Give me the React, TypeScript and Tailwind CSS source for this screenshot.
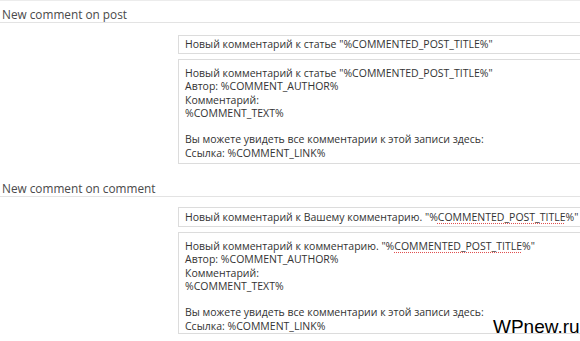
const post = {
  title: 'New comment on post',
  subject: 'Новый комментарий к статье "%COMMENTED_POST_TITLE%"',
  body: [
    'Новый комментарий к статье "%COMMENTED_POST_TITLE%"',
    'Автор: %COMMENT_AUTHOR%',
    'Комментарий:',
    '%COMMENT_TEXT%',
    '',
    'Вы можете увидеть все комментарии к этой записи здесь:',
    'Ссылка: %COMMENT_LINK%',
  ],
};

const Squiggle = ({ children }: { children: React.ReactNode }) => (
  <span className="underline decoration-dotted decoration-[#e05050] underline-offset-2">{children}</span>
);

const Heading = ({ text, className }: { text: string; className: string }) => (
  <div className={`border-b border-[#e3e3e3] pl-[2px] text-[11.8px] leading-[16px] text-[#4a4a4a] ${className}`}>{text}</div>
);

const Input = ({ children, className }: { children: React.ReactNode; className: string }) => (
  <div className={`w-[420px] border border-[#dcdcdc] px-[6px] text-[10.5px] leading-[17px] text-[#333] whitespace-nowrap ${className}`}>
    {children}
  </div>
);

const Body = ({ lines, className }: { lines: React.ReactNode[]; className: string }) => (
  <div className={`w-[420px] border border-[#dcdcdc] px-[6px] pt-[7px] text-[10.5px] leading-[13.3px] text-[#333] ${className}`}>
    {lines.map((line, i) => (
      <div key={i} className="h-[13.3px] whitespace-nowrap">
        {line}
      </div>
    ))}
  </div>
);

export default function App() {
  const body2: React.ReactNode[] = [
    <>
      Новый комментарий к комментарию. "%<Squiggle>COMMENTED_POST_TITLE</Squiggle>%"
    </>,
    ...post.body.slice(1),
  ];

  return (
    <div
      className="relative w-[580px] h-[341px] overflow-hidden bg-white border-t border-[#ececec]"
      style={{ fontFamily: '"Open Sans", "Noto Sans", sans-serif' }}
    >
      <Heading text={post.title} className="pt-[5px]" />
      <div className="pl-[178px] flex flex-col gap-[5px] mt-[12px]">
        <Input className="h-[19px]">{post.subject}</Input>
        <Body lines={post.body} className="h-[105px]" />
      </div>

      <Heading text="New comment on comment" className="mt-[16px]" />
      <div className="pl-[178px] flex flex-col gap-[5px] mt-[10px]">
        <Input className="h-[20px] leading-[18px]">
          Новый комментарий к Вашему комментарию. "%<Squiggle>COMMENTED_POST_TITLE</Squiggle>%"
        </Input>
        <Body lines={body2} className="h-[102px]" />
      </div>

      <div
        className="absolute left-[493px] top-[315px] text-[19px] leading-[22px] text-black"
        style={{ fontFamily: '"Liberation Sans", Arial, sans-serif' }}
      >
        WPnew.ru
      </div>
    </div>
  );
}
